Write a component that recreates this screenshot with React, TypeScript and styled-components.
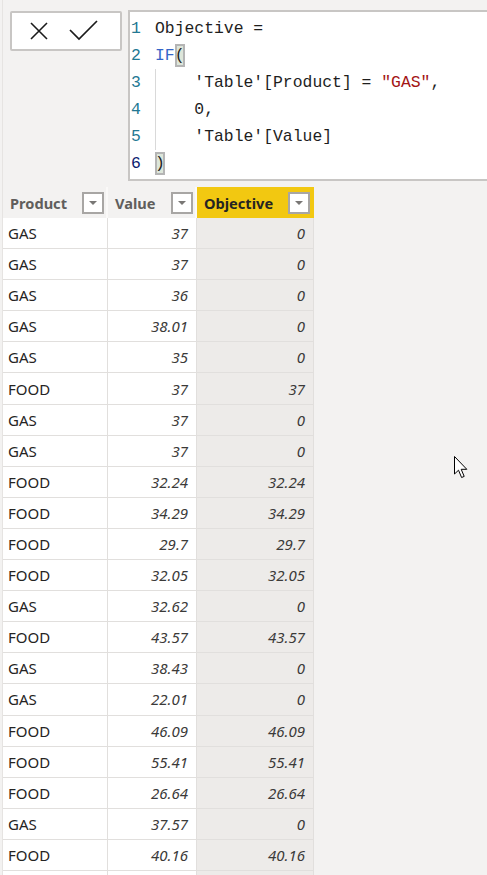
import React from "react";
import styled, { createGlobalStyle } from "styled-components";

const Global = createGlobalStyle`
  html, body { margin: 0; padding: 0; background: #f3f2f1; }
  body { font-family: "Noto Sans", "Open Sans", sans-serif; overflow: hidden; }
  #root { height: 875px; }
`;

const Page = styled.div`
  position: relative;
  height: 875px;
  overflow: hidden;
  background: #f3f2f1;
  border-left: 1px solid #e6e4e2;
  margin-left: 2px;
`;

const TopBar = styled.div`
  display: flex;
  align-items: flex-start;
  padding-top: 10px;
  height: 170px;
`;

const Buttons = styled.div`
  margin: 1px 0 0 7px;
  width: 112px;
  height: 40px;
  box-sizing: border-box;
  background: #fff;
  border: 2px solid #c8c6c4;
  border-radius: 2px;
  display: flex;
  align-items: center;
  gap: 20px;
  padding-left: 17px;
`;

const IconBtn = styled.span`
  display: flex;
  align-items: center;
  justify-content: center;
`;

const Editor = styled.div`
  flex: 1;
  margin-left: 6px;
  height: 164px;
  background: #fff;
  border: 2px solid #c8c6c4;
  border-right: none;
  padding-top: 3px;
  box-sizing: content-box;
  font-family: "Liberation Mono", "DejaVu Sans Mono", monospace;
  font-size: 16.4px;
  color: #1e1e1e;
`;

const Line = styled.div`
  display: flex;
  height: 27px;
  align-items: center;
  white-space: pre;
  position: relative;
`;

const LineNo = styled.span<{ $active?: boolean }>`
  width: 24px;
  padding-left: 1px;
  color: ${(p) => (p.$active ? "#0b216f" : "#237893")};
  font-family: "Liberation Mono", monospace;
`;

const Guide = styled.span`
  position: absolute;
  left: 25px;
  top: 0;
  bottom: 0;
  border-left: 1px solid #d9d9d9;
`;

const Kw = styled.span`
  color: #3465c8;
`;

const Str = styled.span`
  color: #a31515;
`;

const Brace = styled.span`
  background: #dde6da;
  outline: 2px solid #b5b5b5;
  outline-offset: -2px;
  padding: 2px 0;
`;

const Table = styled.div`
  margin-top: 7px;
  display: grid;
  grid-template-columns: 105px 89px 117px;
  width: 311px;
`;

const Head = styled.div<{ $sel?: boolean }>`
  height: 31px;
  box-sizing: border-box;
  background: ${(p) => (p.$sel ? "#f2c811" : "#f3f2f1")};
  border-right: 2px solid ${(p) => (p.$sel ? "#f2c811" : "#faf9f8")};
  display: flex;
  align-items: center;
  justify-content: space-between;
  padding: 0 2px 0 7px;
  font-weight: 700;
  font-size: 14.6px;
  color: ${(p) => (p.$sel ? "#252423" : "#605e5c")};
`;

const Drop = styled.span`
  width: 22px;
  height: 22px;
  box-sizing: border-box;
  background: #fff;
  border: 2px solid #a8a6a4;
  display: flex;
  align-items: center;
  justify-content: center;
  &::after {
    content: "";
    border-left: 4px solid transparent;
    border-right: 4px solid transparent;
    border-top: 4px solid #797775;
  }
`;

const Cell = styled.div<{ $num?: boolean; $calc?: boolean }>`
  height: 31.1px;
  box-sizing: border-box;
  background: ${(p) => (p.$calc ? "#edebe9" : "#fff")};
  border-right: 1px solid #e1dfdd;
  border-bottom: 1px solid #e1dfdd;
  display: flex;
  align-items: center;
  justify-content: ${(p) => (p.$num ? "flex-end" : "flex-start")};
  padding: 0 ${(p) => (p.$num ? "8px" : "5px")};
  font-size: 15px;
  font-style: ${(p) => (p.$num ? "italic" : "normal")};
  color: ${(p) => (p.$num ? "#3b3a39" : "#252423")};
`;

const Pointer = styled.svg`
  position: absolute;
  left: 450px;
  top: 455px;
`;

const rows: [string, string, string][] = [
  ["GAS", "37", "0"],
  ["GAS", "37", "0"],
  ["GAS", "36", "0"],
  ["GAS", "38.01", "0"],
  ["GAS", "35", "0"],
  ["FOOD", "37", "37"],
  ["GAS", "37", "0"],
  ["GAS", "37", "0"],
  ["FOOD", "32.24", "32.24"],
  ["FOOD", "34.29", "34.29"],
  ["FOOD", "29.7", "29.7"],
  ["FOOD", "32.05", "32.05"],
  ["GAS", "32.62", "0"],
  ["FOOD", "43.57", "43.57"],
  ["GAS", "38.43", "0"],
  ["GAS", "22.01", "0"],
  ["FOOD", "46.09", "46.09"],
  ["FOOD", "55.41", "55.41"],
  ["FOOD", "26.64", "26.64"],
  ["GAS", "37.57", "0"],
  ["FOOD", "40.16", "40.16"],
  ["", "", ""],
];

export default function App() {
  return (
    <>
      <Global />
      <Page>
        <TopBar>
          <Buttons>
            <IconBtn>
              <svg width="20" height="20" viewBox="0 0 20 20">
                <path d="M2 2 L18 18 M18 2 L2 18" stroke="#1b1b1b" strokeWidth="1.6" fill="none" />
              </svg>
            </IconBtn>
            <IconBtn>
              <svg width="30" height="22" viewBox="0 0 30 22">
                <path d="M1 10 L10 19 L28 1" stroke="#1b1b1b" strokeWidth="1.7" fill="none" />
              </svg>
            </IconBtn>
          </Buttons>
          <Editor>
            <Line>
              <LineNo>1</LineNo>Objective =
            </Line>
            <Line>
              <LineNo>2</LineNo>
              <Kw>IF</Kw>
              <Brace>(</Brace>
            </Line>
            <Line>
              <LineNo>3</LineNo>
              <Guide />
              {"    'Table'[Product] = "}
              <Str>"GAS"</Str>,
            </Line>
            <Line>
              <LineNo>4</LineNo>
              <Guide />
              {"    0,"}
            </Line>
            <Line>
              <LineNo>5</LineNo>
              <Guide />
              {"    'Table'[Value]"}
            </Line>
            <Line>
              <LineNo $active>6</LineNo>
              <Brace>)</Brace>
            </Line>
          </Editor>
        </TopBar>
        <Table>
          <Head>
            Product <Drop />
          </Head>
          <Head>
            Value <Drop />
          </Head>
          <Head $sel>
            Objective <Drop />
          </Head>
          {rows.map((r, i) => (
            <React.Fragment key={i}>
              <Cell>{r[0]}</Cell>
              <Cell $num>{r[1]}</Cell>
              <Cell $num $calc>
                {r[2]}
              </Cell>
            </React.Fragment>
          ))}
        </Table>
        <Pointer width="16" height="26" viewBox="0 0 16 26">
          <path
            d="M1.5 1.5 L1.5 19 L5.5 15.2 L8.6 22.5 L11.2 21.4 L8.2 14.3 L13.8 14.3 Z"
            fill="#fff"
            stroke="#000"
            strokeWidth="1"
            strokeLinejoin="miter"
          />
        </Pointer>
      </Page>
    </>
  );
}
